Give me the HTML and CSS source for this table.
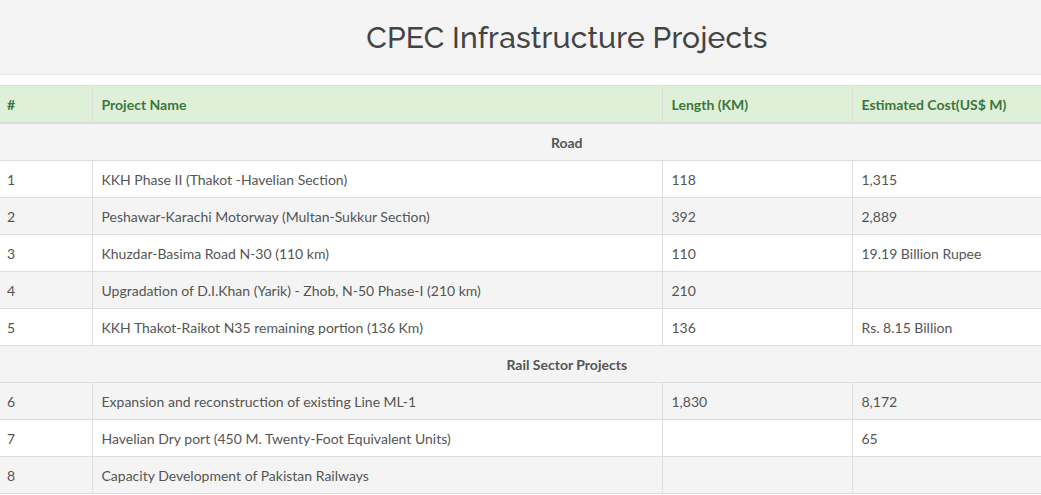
FILE: index.html
```html
<!DOCTYPE html>
<html>
<head>
<meta charset="utf-8">
<link rel="stylesheet" href="styles.css">
</head>
<body>
<div class="page">
  <header class="banner">
    <h2 class="title">CPEC Infrastructure Projects</h2>
  </header>
  <table class="projects">
    <colgroup>
      <col class="c-num"><col class="c-name"><col class="c-len"><col class="c-cost">
    </colgroup>
    <thead>
      <tr><th>#</th><th>Project Name</th><th>Length (KM)</th><th>Estimated Cost(US$ M)</th></tr>
    </thead>
    <tbody>
      <tr class="section grey"><th colspan="4">Road</th></tr>
      <tr><td>1</td><td>KKH Phase II (Thakot -Havelian Section)</td><td>118</td><td>1,315</td></tr>
      <tr class="grey"><td>2</td><td>Peshawar-Karachi Motorway (Multan-Sukkur Section)</td><td>392</td><td>2,889</td></tr>
      <tr><td>3</td><td>Khuzdar-Basima Road N-30 (110 km)</td><td>110</td><td>19.19 Billion Rupee</td></tr>
      <tr class="grey"><td>4</td><td>Upgradation of D.I.Khan (Yarik) - Zhob, N-50 Phase-I (210 km)</td><td>210</td><td></td></tr>
      <tr><td>5</td><td>KKH Thakot-Raikot N35 remaining portion (136 Km)</td><td>136</td><td>Rs. 8.15 Billion</td></tr>
      <tr class="section grey"><th colspan="4">Rail Sector Projects</th></tr>
      <tr class="grey"><td>6</td><td>Expansion and reconstruction of existing Line ML-1</td><td>1,830</td><td>8,172</td></tr>
      <tr><td>7</td><td>Havelian Dry port (450 M. Twenty-Foot Equivalent Units)</td><td></td><td>65</td></tr>
      <tr class="grey"><td>8</td><td>Capacity Development of Pakistan Railways</td><td></td><td></td></tr>
    </tbody>
  </table>
</div>
</body>
</html>
```

FILE: styles.css
```css
html, body {
  margin: 0;
  padding: 0;
  overflow: hidden;
  background: #fff;
}
.page {
  width: 1134px;
  font-family: Lato, "Liberation Sans", sans-serif;
  font-size: 14px;
  line-height: 20px;
  color: #555;
}
.banner {
  background: #f4f4f4;
  border-bottom: 1px solid #e9e9e9;
  height: 74px;
  display: flex;
  align-items: center;
  justify-content: center;
}
.title {
  margin: 0;
  font-family: Raleway, Inter, "Open Sans", sans-serif;
  font-weight: 500;
  font-size: 30px;
  line-height: 33px;
  letter-spacing: 0.15px;
  color: #444;
}
.projects {
  margin-top: 10px;
  width: 1134px;
  border-collapse: collapse;
  table-layout: fixed;
}
.c-num { width: 92px; }
.c-name { width: 570px; }
.c-len { width: 190px; }
.c-cost { width: 282px; }
.projects th, .projects td {
  padding: 9px 8px 7px 9px;
  border: 1px solid #ddd;
  text-align: left;
  vertical-align: top;
  height: 20px;
}
.projects tr > :first-child {
  border-left: none;
  padding-left: 7px;
}
.projects thead th {
  background: #dff0d8;
  color: #3c763d;
  font-weight: 700;
  border-bottom-width: 2px;
}
.projects tbody .grey { background: #f4f4f4; }
.projects .section th {
  text-align: center;
  font-weight: 700;
  color: #555;
  padding-left: 8px;
}
```
